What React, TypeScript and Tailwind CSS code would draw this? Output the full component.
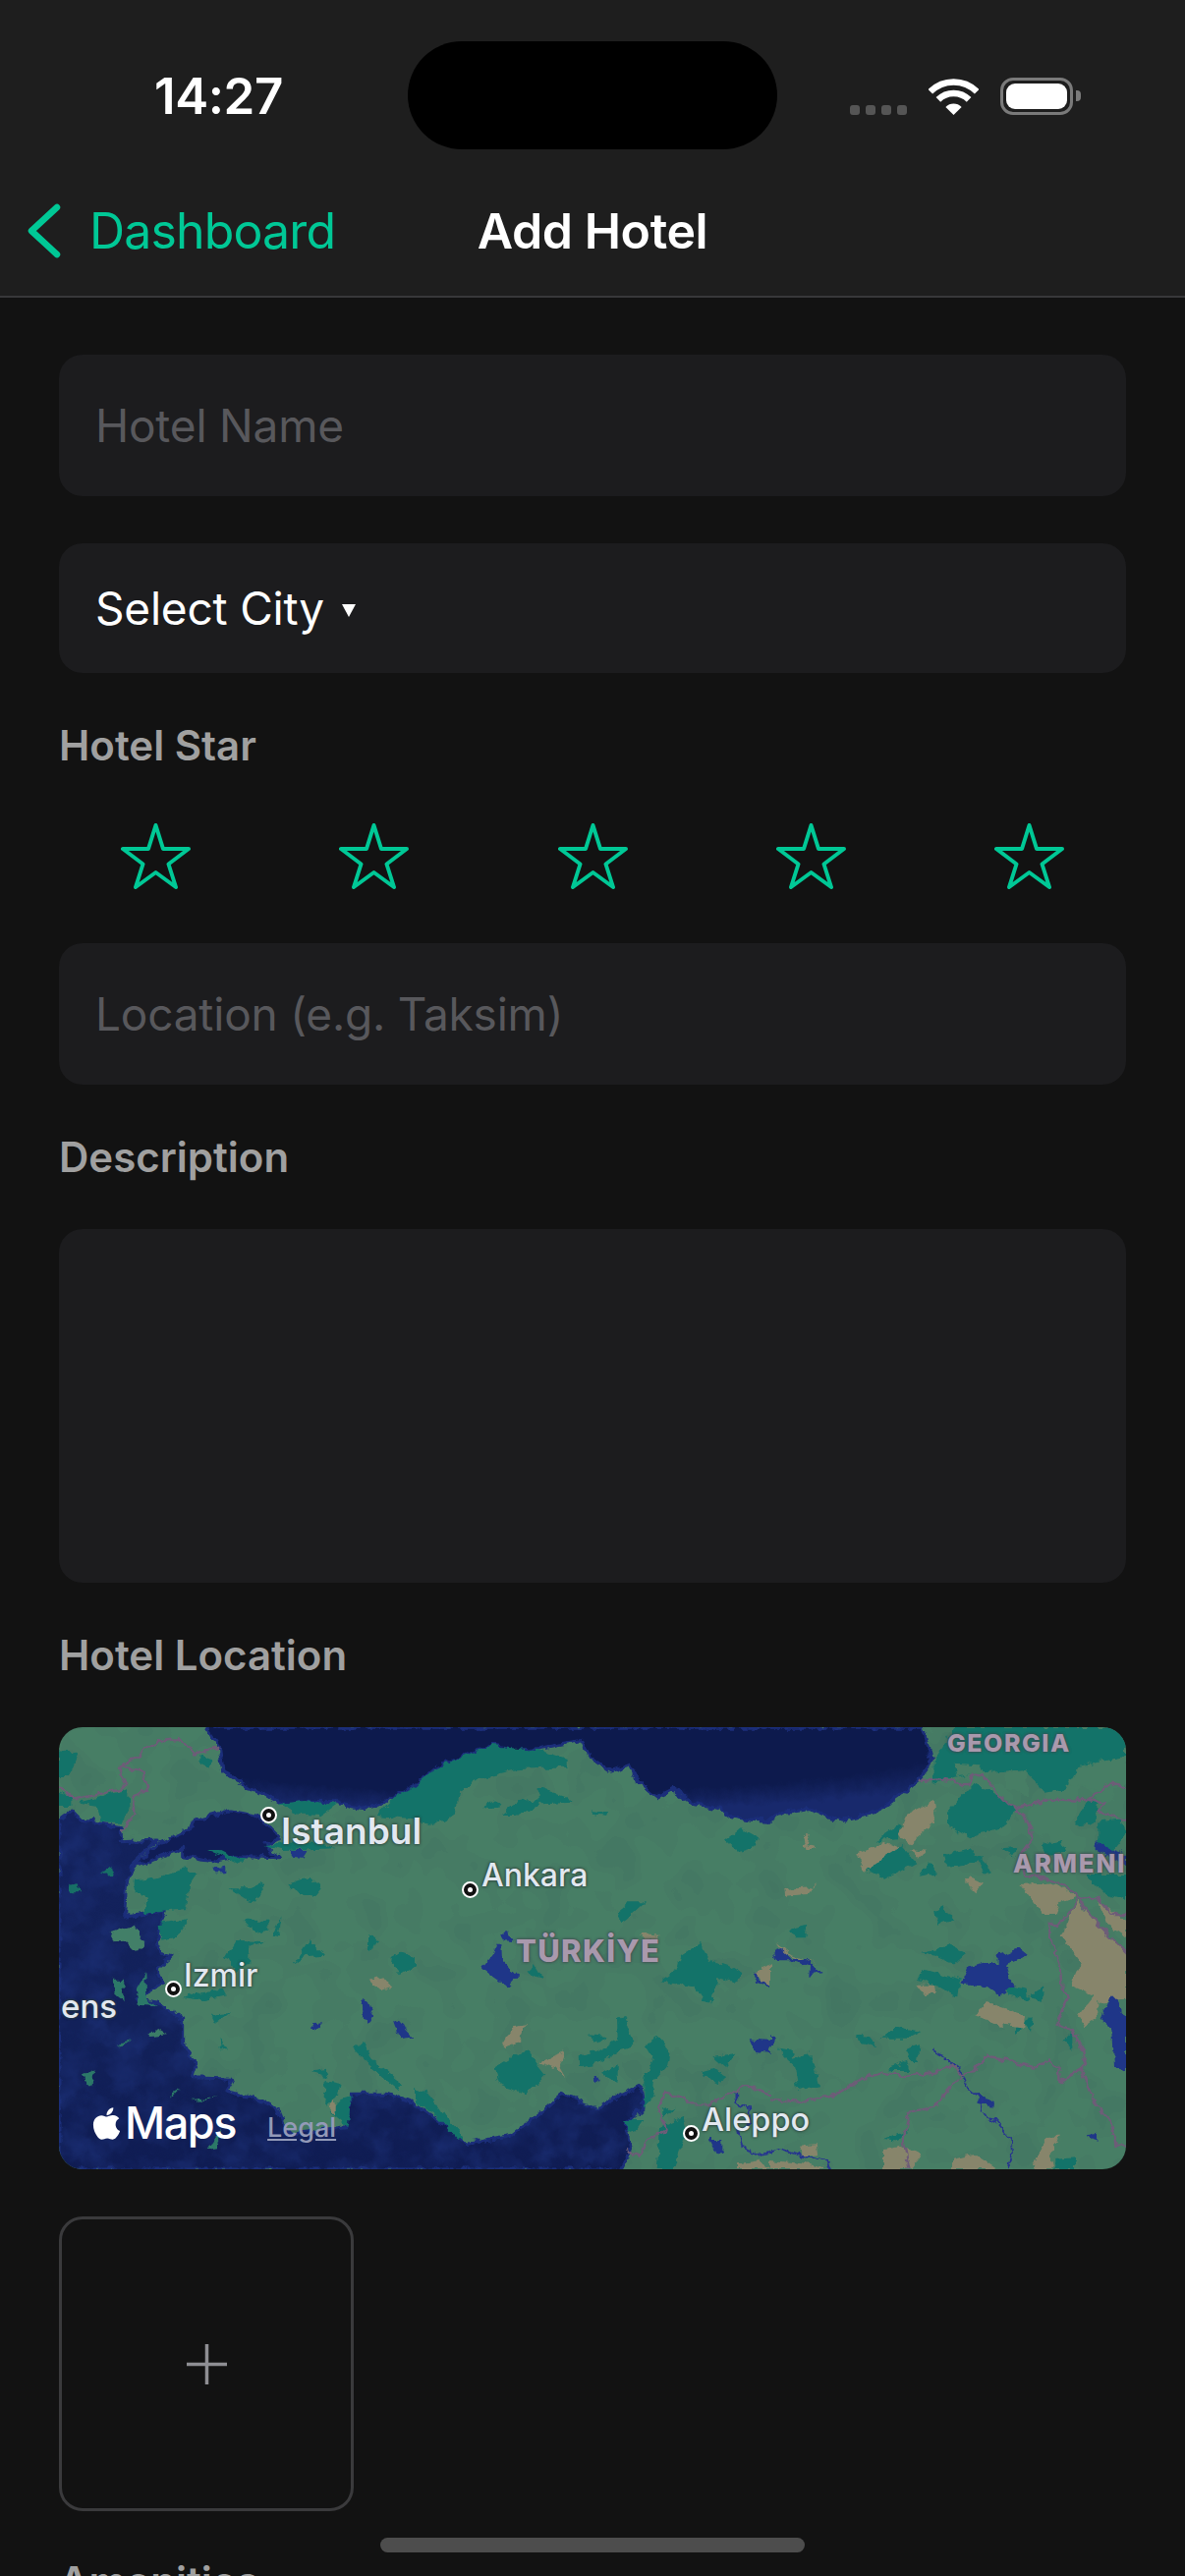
import React from "react";
import { FaApple } from "react-icons/fa";

// map shapes are in zoomed tile coords: each tile is 1086 wide, 1350 high
const blackSea =
  "450,0 470,30 490,60 500,130 540,160 570,180 620,200 660,222 690,240 760,226 850,228 890,245 930,250 980,235 1020,215 1086,180 1146,130 1206,100 1266,75 1326,55 1400,70 1466,65 1540,50 1596,40 1616,85 1650,110 1686,135 1741,115 1766,165 1800,195 1826,215 1876,190 1936,235 1990,245 2016,250 2046,270 2110,282 2172,285 2212,262 2292,250 2350,272 2402,285 2472,265 2530,235 2572,205 2622,165 2650,130 2662,100 2650,50 2637,0";
const medSea =
  "0,285 40,255 70,285 130,295 190,305 190,350 300,345 220,420 205,490 200,580 325,560 300,640 305,690 345,700 300,740 320,780 240,830 300,840 380,890 380,970 420,1040 410,1070 530,1075 510,1110 620,1140 670,1170 700,1240 880,1220 890,1120 1000,1120 1086,1150 1146,1190 1246,1270 1386,1245 1486,1165 1536,1120 1646,1165 1706,1130 1776,1095 1786,1160 1726,1210 1746,1290 1716,1350 0,1350";
const marmara =
  "310,350 400,310 410,285 520,255 600,270 640,300 680,340 630,355 670,398 540,395 470,410 380,395 380,370 300,400 220,430";

const tile1 = {
  forest: [
    "0,70 60,75 30,150 0,150",
    "0,200 40,210 40,240 0,240",
    "60,230 210,190 215,250 190,290 130,290 120,240",
    "430,85 470,100 460,125 430,110",
    "665,235 750,225 850,235 800,270 720,265",
    "625,360 700,350 780,350 850,370 680,375",
    "450,375 490,375 530,395 570,400 550,420 500,395",
    "230,470 300,460 380,430 420,450 400,480 390,555 260,570 270,520 230,500",
    "520,490 580,490 630,475 600,530 575,525",
    "700,480 765,458 800,490 780,515 720,505",
    "305,600 395,585 360,640 310,650",
    "565,590 640,590 640,620 600,628",
    "650,635 680,580 670,640",
    "540,650 630,655 580,670 580,720 540,750 510,700",
    "715,725 765,650 810,695 750,700",
    "945,640 975,650 960,680 945,680",
    "1005,710 1040,685 1086,700 1086,730 1045,755",
    "420,810 500,800 510,820 440,835 380,825",
    "465,875 525,870 480,905",
    "900,985 930,960 960,1020 1050,1090 1040,1110 960,1040",
    "770,1050 810,1040 820,1070",
    "815,1080 860,1090 850,1130 810,1160",
    "860,1140 890,1130 885,1220 830,1175",
    "490,950 510,985 495,985",
    "1030,210 1086,180 1086,280 970,270",
  ],
  tan: ["950,770 985,760 1015,795 985,805", "820,1160 845,1135 845,1185"],
  lake: [
    "705,375 760,375 745,398 715,395",
    "475,430 505,425 505,445 480,445",
    "925,830 945,840 960,880 945,910 930,890",
    "1020,895 1050,900 1075,950 1040,955",
    "770,910 805,907 780,925",
  ],
  border: [
    "0,180 50,220 120,205 190,190 205,175 180,125 230,100 265,65 330,40 370,35 415,80 490,62",
    "185,120 260,135 270,190 225,215 230,270 190,320",
  ],
};

const tile2 = {
  forest: [
    "0,180 60,130 130,95 240,55 380,70 470,100 470,125 390,125 310,130 200,155 135,200 125,265 60,300 0,285",
    "205,245 240,220 270,240 220,250",
    "260,270 320,225 380,220 380,185 470,215 480,230 390,235 310,270",
    "540,255 590,262 585,273 550,268",
    "950,345 995,310 1050,340 1040,365 990,380",
    "615,565 650,535 705,535 650,585 635,595",
    "750,775 800,740 810,700 870,660 900,710 960,730 1000,755 975,780 925,765 910,835 880,835 850,790",
    "345,745 365,730 390,770 365,765",
    "530,940 590,945 565,965",
    "500,1005 570,985 620,955 618,890 640,885 670,975 620,990 560,1030 502,1040",
    "245,1040 340,985 400,1060 340,1120 260,1095",
    "570,1055 620,1030 620,1085 590,1070",
    "705,970 740,945 780,990 770,1040 735,1080 730,1130 700,1160 700,1080 730,1010",
    "910,1005 985,995 950,1040",
    "870,1055 910,1045 945,1065 930,1090",
    "0,1105 40,1115 90,1190 150,1255 130,1260 60,1180 0,1140",
    "640,1200 700,1200 680,1230 650,1240",
    "760,1170 800,1160 760,1195",
    "750,1220 820,1190 830,1230 790,1350 740,1350 745,1290",
  ],
  tan: [
    "270,965 300,915 340,910 320,960 280,975",
    "380,1020 460,990 440,1040 460,1075 425,1040",
    "690,630 750,635 730,650 695,645",
    "1040,750 1086,720 1086,790 1060,780",
    "990,1330 1050,1320 1086,1350 990,1350",
  ],
  lake: [
    "205,735 240,690 248,665 268,665 270,715 315,760 285,795 235,760",
    "268,630 285,628 305,655 275,652",
    "1035,750 1045,780 1086,795 1086,790 1050,772 1048,748",
    "1025,955 1086,960 1086,995 1040,990",
    "900,1260 940,1260 940,1300 920,1300",
    "548,1065 570,1075 550,1085",
  ],
  border: [
    "650,1290 685,1310 710,1260 770,1230 745,1180 765,1115 825,1130 835,1150 890,1150 985,1110 1015,1095 1086,1120",
  ],
  river: ["985,1115 985,1145 1020,1160 1025,1210 990,1230 1000,1280 1050,1310 1086,1300"],
};

const tile3 = {
  forest: [
    "500,100 560,0 1086,0 1086,90 940,120 900,190 840,200 770,130 630,140 500,170",
    "540,260 620,170 700,210 750,250 720,300 610,340 540,300",
    "530,390 610,370 640,400 680,440 660,450 630,410 540,425",
    "20,980 60,985 70,1010 110,995 130,1015 150,1095 85,1110 75,1030",
    "60,620 115,605 105,640 70,640",
    "505,565 530,550 555,590 510,605",
    "465,690 500,680 550,665 600,690 560,725 500,700",
    "450,770 470,740 580,770 570,825 510,790",
    "290,435 400,360 445,415 350,465",
    "455,455 485,415 510,445",
    "320,345 395,300 390,340",
    "925,300 970,225 1000,230 990,290",
    "1000,290 1070,280 1086,320 1040,380 1000,360",
    "960,450 1086,450 1086,530 1020,510",
    "830,360 890,345 900,380 850,390",
    "705,370 760,365 740,400",
    "260,940 300,945 325,975 270,965",
    "340,950 390,915 460,930 420,950",
    "410,985 455,965 450,1020 430,1020",
    "360,1040 420,1020 430,1050 370,1050",
    "345,1260 420,1230 390,1265",
    "750,910 775,905 750,940",
    "775,900 800,885 795,930",
    "790,820 835,790 830,840",
    "720,790 785,800 790,835 720,820",
    "865,1320 930,1315 930,1350 865,1350",
    "895,960 925,930 925,990",
  ],
  land: [
    "720,140 780,130 790,210 720,190",
    "910,170 950,120 1086,90 1086,180 1000,190",
    "560,110 640,115 650,140 570,150",
  ],
  tan: [
    "390,330 410,270 470,240 500,220 505,260 480,310 430,355",
    "265,385 350,350 395,370 330,410 285,440",
    "425,375 475,380 460,400",
    "100,340 120,320 110,360 140,370 110,378",
    "40,495 125,490 140,480 115,510 42,515",
    "590,470 605,460 650,480 625,505",
    "760,480 870,475 930,520 880,540 870,570 830,570",
    "890,640 915,570 940,530 990,590 1086,690 1086,830 1000,840 1000,880 960,910 940,880 990,820 920,790 950,720",
    "1000,530 1086,590 1086,640 1030,600",
    "445,785 500,785 505,810 470,820",
    "625,880 660,840 780,880 775,920 700,910",
    "20,660 60,690 140,720 110,712 40,690",
    "345,1290 400,1280 460,1310 430,1350 345,1350",
    "555,1320 620,1305 690,1350 555,1350",
    "820,1300 850,1250 885,1250 850,1310 860,1350 800,1350",
    "90,1280 140,1275 145,1305 100,1310",
    "0,1320 100,1330 170,1350 0,1350",
  ],
  lake: [
    "580,785 600,735 660,720 695,720 695,695 760,675 785,695 720,725 740,790 700,820 665,795 610,785",
    "5,685 30,675 65,705 110,705 130,730 155,750 118,758 120,730 60,712 20,712",
    "1010,890 1035,830 1060,830 1086,880 1086,1050 1050,1040 1045,920",
    "965,1240 995,1235 995,1265 980,1260",
    "995,345 1040,370 1086,390 1086,420 995,380",
    "0,940 18,950 0,985",
    "625,1115 680,1140 680,1160 640,1150",
  ],
  border: [
    "0,1135 80,1145 180,1130 280,1075 340,1055 410,1068 500,1055 555,1030 580,1060 620,1050 650,1005 740,1020 810,1040 850,1015 880,1040 880,1085 950,1045 975,1110 1000,1160 1040,1200 1055,1280 1086,1280",
    "580,1065 500,1160 425,1175 405,1260 425,1350",
    "455,165 520,160 600,175 625,145 650,150 720,230 760,245 860,220 960,225 1040,170 1086,180",
    "750,245 790,290 800,340 765,385 780,450 880,470 940,520 1000,600 1086,690",
    "940,520 910,570 880,600 845,600 885,740 890,800 915,815 875,905 935,940 965,1030 950,1045",
    "940,525 1000,520 1040,570 1086,570",
    "960,220 1020,230 1000,255 1086,285",
  ],
  river: [
    "497,980 500,995 545,1015 575,1040 600,1100 650,1140 640,1175 680,1195 735,1260 738,1300 725,1350",
    "0,1300 30,1290 100,1310 170,1325 185,1350",
  ],
};

type Tile = {
  forest: string[];
  tan: string[];
  lake: string[];
  border: string[];
  land?: string[];
  river?: string[];
};

const MapTile = ({ tile, x }: { tile: Tile; x: number }) => (
  <g transform={`translate(${x} 0)`}>
    {tile.forest.map((p) => <polygon key={p} points={p} fill="#137369" />)}
    {tile.land?.map((p) => <polygon key={p} points={p} fill="#477e65" />)}
    {tile.tan.map((p) => <polygon key={p} points={p} fill="#87856b" />)}
    {tile.lake.map((p) => <polygon key={p} points={p} fill="#1f3688" />)}
    {tile.river?.map((p) => (
      <polyline key={p} points={p} fill="none" stroke="#26348f" strokeWidth="5" />
    ))}
    {tile.border.map((p) => (
      <polyline key={p} points={p} fill="none" stroke="#6e5c78" strokeWidth="7" strokeLinejoin="round" />
    ))}
  </g>
);

const MapDrawing = () => (
  <svg viewBox="0 0 3258 1350" preserveAspectRatio="none" className="block w-full h-full">
    <defs>
      <radialGradient id="blackSeaFill" cx="0.45" cy="0.1" r="0.8">
        <stop offset="0.75" stopColor="#0d1a4d" />
        <stop offset="1" stopColor="#18296c" />
      </radialGradient>
      <linearGradient id="medFill" x1="0" y1="0" x2="0" y2="1">
        <stop offset="0" stopColor="#13225d" />
        <stop offset="0.6" stopColor="#12215a" />
        <stop offset="1" stopColor="#0f1c53" />
      </linearGradient>
      <clipPath id="medClip">
        <polygon points={medSea} />
      </clipPath>
      {/* roughens the hand traced outlines so coasts and patches look like map data */}
      <filter id="rough" x="0" y="0" width="100%" height="100%" colorInterpolationFilters="sRGB">
        <feTurbulence type="fractalNoise" baseFrequency="0.035" numOctaves="3" seed="7" />
        <feDisplacementMap in="SourceGraphic" scale="26" xChannelSelector="R" yChannelSelector="G" />
      </filter>
      <filter id="landTone" x="0" y="0" width="100%" height="100%" colorInterpolationFilters="sRGB">
        <feTurbulence type="fractalNoise" baseFrequency="0.009" numOctaves="2" seed="3" />
        <feColorMatrix values="0 0 0 0 0.24  0 0 0 0 0.42  0 0 0 0 0.37  1.6 0 0 0 -0.55" />
        <feComponentTransfer>
          <feFuncA type="discrete" tableValues="0 0.15 0.3 0.45" />
        </feComponentTransfer>
      </filter>
      <filter id="seaTone" x="0" y="0" width="100%" height="100%" colorInterpolationFilters="sRGB">
        <feTurbulence type="fractalNoise" baseFrequency="0.012" numOctaves="3" seed="11" />
        <feColorMatrix values="0 0 0 0 0.11  0 0 0 0 0.19  0 0 0 0 0.47  1.4 0 0 0 -0.5" />
      </filter>
    </defs>
    <rect width="3258" height="1350" fill="#477e65" />
    <rect width="3258" height="1350" filter="url(#landTone)" />
    <polygon points="1106,185 1186,130 1136,210 1101,225" fill="#4f8a6c" />
    <g filter="url(#rough)">
      <polygon points={blackSea} fill="url(#blackSeaFill)" stroke="#1b2e7a" strokeWidth="10" strokeLinejoin="round" />
      <polygon points={medSea} fill="url(#medFill)" stroke="#1b2e7a" strokeWidth="9" strokeLinejoin="round" />
      <rect width="3258" height="1350" filter="url(#seaTone)" clipPath="url(#medClip)" />
      <polygon points={marmara} fill="#101d56" stroke="#1b2e7a" strokeWidth="9" strokeLinejoin="round" />
      <polygon points="30,480 50,475 70,505 40,505" fill="#176f66" />
      <polygon points="130,445 165,430 170,450 135,452" fill="#176f66" />
      <polygon points="155,630 230,605 262,660 240,690 200,650 165,655" fill="#427f68" />
      <polygon points="160,770 195,770 200,835 175,815" fill="#2c7868" />
      <polygon points="240,810 262,750 265,830 300,850 245,845" fill="#2c7868" />
      <polygon points="270,935 300,922 330,940 280,945" fill="#3b7c67" />
      <polygon points="180,965 220,955 190,975" fill="#2c7868" />
      <polygon points="75,1060 110,1045 100,1090 85,1090" fill="#2c7868" />
      <polygon points="350,1115 375,1100 345,1130" fill="#2c7868" />
      <polygon points="405,1140 480,1125 420,1145" fill="#2c7868" />
      <polygon points="450,1290 495,1225 480,1285" fill="#2c7868" />
      <MapTile tile={tile1} x={0} />
      <MapTile tile={tile2} x={1086} />
      <MapTile tile={tile3} x={2172} />
    </g>
  </svg>
);

const Pin = ({ className }: { className: string }) => (
  <span className={`absolute w-[17px] h-[17px] rounded-full border-[2px] border-white bg-[#111] flex items-center justify-center ${className}`}>
    <span className="w-[5px] h-[5px] rounded-full bg-white" />
  </span>
);

const cityLabel =
  "absolute leading-none text-[#e2e8f0] [text-shadow:0_0_3px_#2b3f3a,0_0_3px_#2b3f3a]";
const countryLabel =
  "absolute leading-none font-extrabold text-[#a999ad] [text-shadow:0_0_3px_#3e4a50,0_0_3px_#3e4a50]";

const Star = () => (
  <svg width="71" height="67" viewBox="0 0 71 67" fill="none">
    <path
      d="M35.5 2 L43 26 L69 26 L48.5 41.5 L56 65 L35.5 50 L15 65 L22.5 41.5 L2 26 L28 26 Z"
      stroke="#00c896"
      strokeWidth="4"
      strokeLinejoin="round"
    />
  </svg>
);

const Label = ({ children, className }: { children: React.ReactNode; className: string }) => (
  <div className={`h-12 flex items-center text-[42px] font-semibold text-[#a0a0a0] ${className}`}>
    {children}
  </div>
);

const inputText = "flex items-center pl-[37px] rounded-[24px] bg-[#1c1c1e] text-[46px] tracking-[-0.2px]";

const App: React.FC = () => {
  return (
    <div className="relative h-[2622px] overflow-hidden bg-[#121212] font-['Inter',sans-serif]">
      <header className="h-[303px] bg-[#1e1e1e] border-b-2 border-[#38383a]">
        <div className="relative h-[195px] pl-[157px] pr-[106px] flex items-center justify-between">
          <span className="text-[51px] leading-none font-semibold text-white tracking-[-0.4px]">14:27</span>
          <div className="absolute left-[415px] top-[42px] w-[376px] h-[110px] rounded-[55px] bg-black" />
          <div className="flex items-end">
            <div className="flex gap-[6px] mr-[22px]">
              <span className="w-[10px] h-[10px] rounded-[3px] bg-[#555]" />
              <span className="w-[10px] h-[10px] rounded-[3px] bg-[#555]" />
              <span className="w-[10px] h-[10px] rounded-[3px] bg-[#555]" />
              <span className="w-[10px] h-[10px] rounded-[3px] bg-[#555]" />
            </div>
            <svg className="mr-[22px]" width="51" height="37" viewBox="0 0 51 37" fill="none">
              <path d="M1.8 13.3 A33.5 33.5 0 0 1 49.2 13.3" stroke="#fff" strokeWidth="6.5" />
              <path d="M9.9 21.4 A22 22 0 0 1 41.1 21.4" stroke="#fff" strokeWidth="6.5" />
              <path d="M25.5 37 L17.4 28.9 A11.5 11.5 0 0 1 33.6 28.9 Z" fill="#fff" />
            </svg>
            <div className="w-[74px] h-[38px] rounded-[13px] border-[3px] border-[#7a7a7a] p-[3px]">
              <div className="w-full h-full rounded-[9px] bg-white" />
            </div>
            <div className="ml-[3px] self-center w-[5px] h-[11px] rounded-r-[4px] bg-[#7a7a7a]" />
          </div>
        </div>
        <nav className="relative h-[80px] flex items-center">
          <svg className="ml-[28px]" width="34" height="56" viewBox="0 0 34 56" fill="none">
            <path d="M30 4 L4 28 L30 52" stroke="#00c896" strokeWidth="6.5" strokeLinecap="round" strokeLinejoin="round" />
          </svg>
          <span className="ml-[29px] text-[50px] leading-none text-[#00c896] tracking-[-0.85px]">Dashboard</span>
          <span className="absolute left-0 right-0 text-center text-[50px] leading-none font-semibold text-white tracking-[-0.4px]">
            Add Hotel
          </span>
        </nav>
      </header>

      <main className="px-[60px] pt-[58px]">
        <div className={`h-[144px] text-[#58585c] ${inputText}`}>Hotel Name</div>
        <div className={`mt-[48px] h-[132px] text-white ${inputText}`}>
          Select City
          <span className="ml-[18px] mt-[4px] w-0 h-0 border-x-[7px] border-x-transparent border-t-[13px] border-t-white" />
        </div>

        <Label className="mt-[49px]">Hotel Star</Label>
        <div className="mt-[56px] px-[63px] flex justify-between">
          <Star />
          <Star />
          <Star />
          <Star />
          <Star />
        </div>

        <div className={`mt-[55px] h-[144px] text-[#58585c] ${inputText}`}>Location (e.g. Taksim)</div>

        <Label className="mt-[49px]">Description</Label>
        <div className="mt-[50px] h-[360px] rounded-[24px] bg-[#1c1c1e]" />

        <Label className="mt-[49px]">Hotel Location</Label>
        <div className="relative mt-[50px] h-[450px] rounded-[24px] overflow-hidden">
          <MapDrawing />
          <Pin className="left-[205px] top-[81px]" />
          <span className={`${cityLabel} left-[226px] top-[87px] text-[37px] font-semibold`}>Istanbul</span>
          <Pin className="left-[410px] top-[157px]" />
          <span className={`${cityLabel} left-[430px] top-[135px] text-[32px] font-medium`}>Ankara</span>
          <Pin className="left-[108px] top-[258px]" />
          <span className={`${cityLabel} left-[127px] top-[237px] text-[32px] font-medium`}>Izmir</span>
          <span className={`${cityLabel} left-[2px] top-[268px] text-[33px] font-medium`}>ens</span>
          <Pin className="left-[635px] top-[405px]" />
          <span className={`${cityLabel} left-[654px] top-[384px] text-[32.5px] font-medium`}>Aleppo</span>
          <span className={`${countryLabel} left-[465px] top-[212px] text-[31px] tracking-[1.3px]`}>TÜRKİYE</span>
          <span className={`${countryLabel} left-[904px] top-[4px] text-[25px] tracking-[1.5px]`}>GEORGIA</span>
          <span className={`${countryLabel} left-[971px] top-[126px] text-[26px] tracking-[1.7px]`}>ARMENIA</span>
          <div className="absolute left-[30px] top-[378px] flex items-center">
            <FaApple className="text-white" size={37} />
            <span className="text-[45px] leading-[50px] font-medium text-white tracking-[-1.4px]">Maps</span>
            <span className="ml-[32px] mt-[10px] text-[27px] leading-[30px] font-medium text-[#939ab8] underline">
              Legal
            </span>
          </div>
        </div>

        <div className="mt-[48px] w-[300px] h-[300px] rounded-[24px] border-[3px] border-[#3a3a3c] flex items-center justify-center">
          <svg width="41" height="41" viewBox="0 0 41 41" fill="none">
            <path d="M20.5 0 V41 M0 20.5 H41" stroke="#8e8e93" strokeWidth="3.5" />
          </svg>
        </div>

        <Label className="mt-[47px]">Amenities</Label>
      </main>

      <div className="absolute left-[387px] top-[2583px] w-[432px] h-[15px] rounded-full bg-[#4d4d4d]" />
    </div>
  );
};

export default App;
